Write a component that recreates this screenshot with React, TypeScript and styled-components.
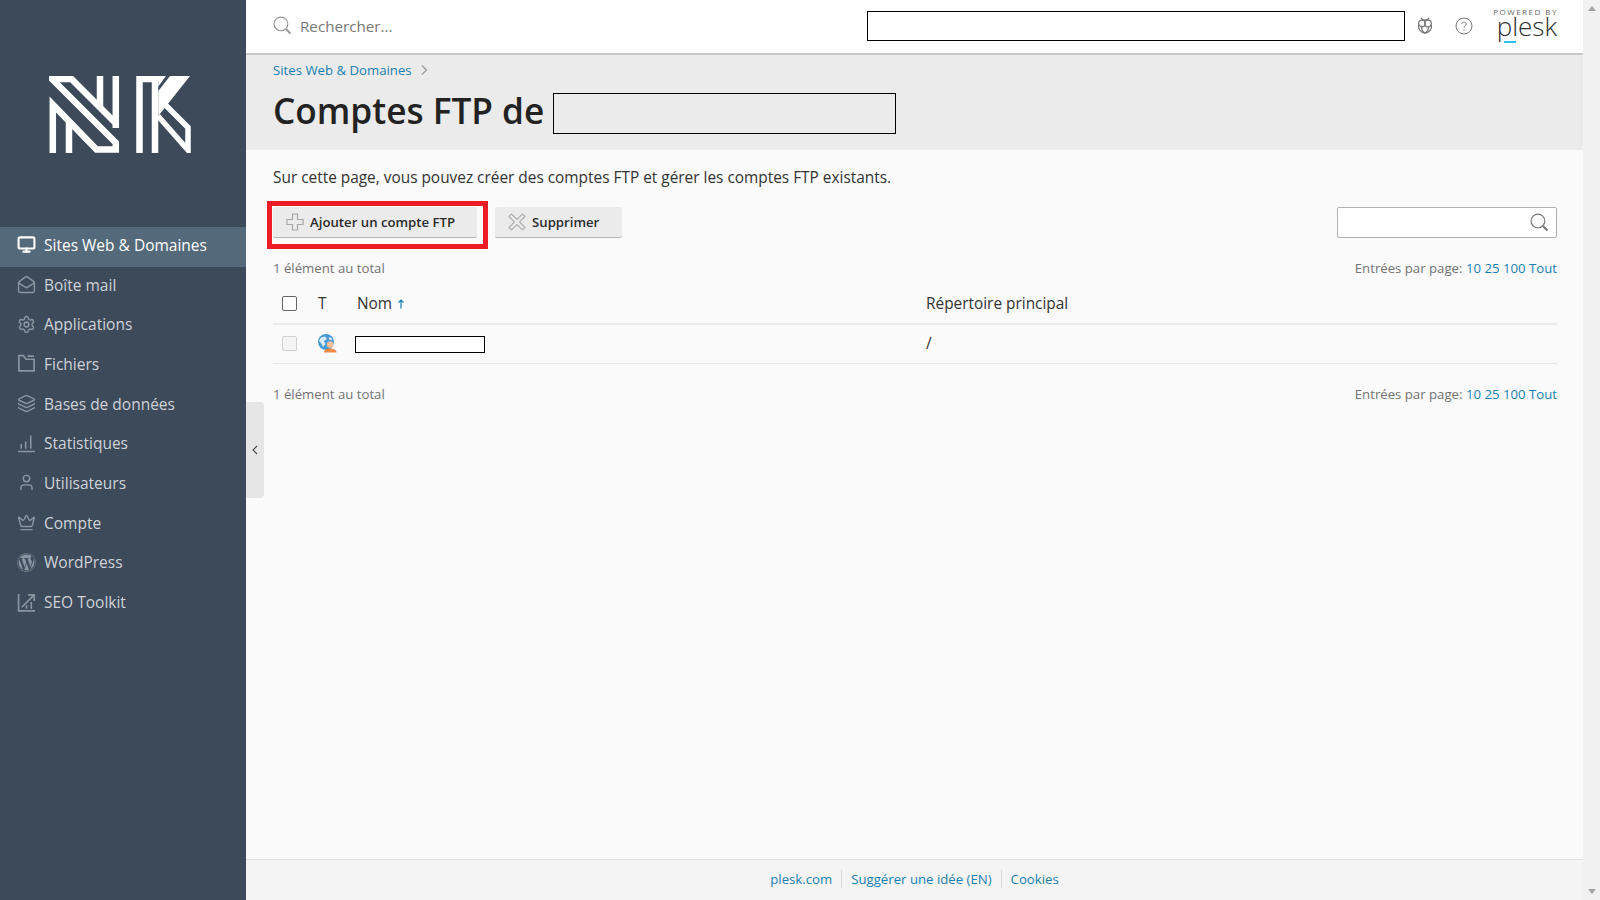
import { ReactNode } from 'react';
import styled, { createGlobalStyle } from 'styled-components';
import { Crown, Layers, MailOpen, Monitor, Settings, User } from 'lucide-react';
import { FaWordpress } from 'react-icons/fa';

const GlobalStyle = createGlobalStyle`
  html, body {
    margin: 0;
    padding: 0;
    height: 100%;
    overflow: hidden;
    font-family: "Open Sans", "Liberation Sans", sans-serif;
  }
  * { box-sizing: border-box; }
`;

const Page = styled.div`
  display: grid;
  grid-template-columns: 246px 1fr 17px;
  height: 900px;
`;

/* --- sidebar --- */
const Sidebar = styled.aside`
  background: #3c4a5a;
  display: flex;
  flex-direction: column;
`;

const LogoArea = styled.div`
  height: 227px;
  padding: 76px 0 0 49px;
`;

const Nav = styled.nav`
  display: flex;
  flex-direction: column;
`;

const NavItem = styled.a<{ $active?: boolean }>`
  display: flex;
  align-items: center;
  gap: 8.5px;
  height: 39.7px;
  padding: 0 0 4px 16.5px;
  font-size: 15.5px;
  color: ${({ $active }) => ($active ? '#ffffff' : '#cfd3d8')};
  background: ${({ $active }) => ($active ? '#546979' : 'transparent')};
  svg {
    flex: none;
    width: 19px;
    height: 19px;
    color: ${({ $active }) => ($active ? '#ffffff' : '#8b95a0')};
  }
`;

/* --- main column --- */
const Main = styled.main`
  position: relative;
  display: flex;
  flex-direction: column;
  min-width: 0;
  background: #fafafa;
`;

const TopBar = styled.header`
  display: flex;
  align-items: center;
  height: 55px;
  flex: none;
  padding: 0 26px 2px 27px;
  background: #ffffff;
  border-bottom: 2px solid #c9c9c9;
`;

const GlobalSearch = styled.div`
  display: flex;
  align-items: center;
  gap: 8px;
  flex: 1;
  font-size: 15.2px;
  color: #777777;
  svg { width: 19px; height: 19px; color: #999999; }
`;

const RedactedField = styled.div`
  width: 538px;
  height: 30px;
  background: #ffffff;
  border: 1px solid #000000;
`;

const TopIcon = styled.span<{ $left: number }>`
  display: flex;
  margin-left: ${({ $left }) => $left}px;
  color: #7a7a7a;
`;

const PleskLogo = styled.div`
  position: relative;
  display: flex;
  flex-direction: column;
  align-items: flex-end;
  align-self: flex-start;
  width: 66px;
  margin: 7px 0 0 18px;
  color: #2d2d2d;
`;

const PoweredBy = styled.span`
  font-size: 8px;
  line-height: 9px;
  letter-spacing: 1.5px;
  margin-right: -1px;
  color: #666666;
  white-space: nowrap;
`;

const PleskWord = styled.span`
  font-weight: 300;
  font-size: 26px;
  line-height: 21px;
`;

const PleskAccent = styled.span`
  position: absolute;
  left: 13px;
  top: 34px;
  width: 12px;
  height: 2px;
  background: #28c3ea;
`;

const PageHead = styled.section`
  flex: none;
  height: 95px;
  padding: 6px 27px 0;
  background: #ebebeb;
`;

const Breadcrumb = styled.div`
  display: flex;
  align-items: center;
  gap: 8px;
  height: 17px;
  font-size: 13.2px;
  color: #1a7fb0;
  svg { width: 8px; height: 10px; }
`;

const TitleRow = styled.div`
  display: flex;
  align-items: center;
  gap: 9px;
  margin-top: 9px;
`;

const Title = styled.h1`
  margin: 0 0 6px;
  font-size: 35.2px;
  line-height: 46px;
  font-weight: 600;
  color: #222222;
`;

const RedactedTitle = styled.div`
  width: 343px;
  height: 41px;
  border: 1px solid #000000;
`;

const Content = styled.section`
  flex: 1;
  padding: 18px 26px 0 27px;
`;

const Intro = styled.p`
  margin: 0;
  font-size: 15.4px;
  line-height: 20px;
  color: #333333;
`;

const Toolbar = styled.div`
  display: flex;
  align-items: center;
  gap: 18px;
  margin-top: 19px;
`;

const ButtonWrap = styled.div`
  position: relative;
  display: flex;
`;

const RedFrame = styled.span`
  position: absolute;
  inset: -6px -11px -11px -6px;
  border: 5px solid #ed1c24;
  pointer-events: none;
`;

const ToolButton = styled.button<{ $width: number }>`
  display: flex;
  align-items: center;
  gap: 6px;
  width: ${({ $width }) => $width}px;
  height: 31px;
  padding: 0 0 0 13px;
  border: none;
  border-bottom: 1px solid #b5b5b5;
  border-radius: 2px;
  background: #ebebeb;
  font-family: inherit;
  font-size: 13.2px;
  font-weight: 600;
  color: #2b2b2b;
  svg { width: 18px; height: 18px; flex: none; }
`;

const ListSearch = styled.div`
  display: flex;
  align-items: center;
  justify-content: flex-end;
  width: 220px;
  height: 31px;
  margin-left: auto;
  padding-right: 7px;
  background: #ffffff;
  border: 1px solid #b0b0b0;
  border-radius: 2px;
  color: #777777;
  svg { width: 19px; height: 19px; }
`;

const ListMeta = styled.div<{ $top: number }>`
  display: flex;
  justify-content: space-between;
  margin-top: ${({ $top }) => $top}px;
  font-size: 13.2px;
  line-height: 18px;
  color: #737373;
`;

const PageSizes = styled.span`
  a { color: #1a7fb0; }
`;

const Table = styled.div`
  margin-top: 11px;
`;

const Row = styled.div<{ $head?: boolean }>`
  display: grid;
  grid-template-columns: 36px 39px 569px 1fr;
  align-items: center;
  height: ${({ $head }) => ($head ? 37 : 39)}px;
  padding: 0 0 ${({ $head }) => ($head ? 4 : 2)}px 9px;
  font-size: 15.4px;
  color: #333333;
  border-bottom: ${({ $head }) => ($head ? '2px solid #ebebeb' : '1px solid #e6e6e6')};
`;

const CheckBox = styled.span<{ $disabled?: boolean }>`
  display: block;
  width: 15px;
  height: 15px;
  border-radius: 2px;
  background: ${({ $disabled }) => ($disabled ? '#f4f4f4' : '#ffffff')};
  border: 1px solid ${({ $disabled }) => ($disabled ? '#d0d0d0' : '#666666')};
`;

const SortArrow = styled.svg`
  width: 8px;
  height: 10px;
  margin-left: 5px;
  color: #1a7fb0;
`;

const RedactedName = styled.div`
  width: 130px;
  height: 17px;
  margin: 2px 0 0 -2px;
  background: #ffffff;
  border: 1px solid #000000;
`;

const CollapseHandle = styled.div`
  position: absolute;
  left: 0;
  top: 402px;
  display: flex;
  align-items: center;
  justify-content: center;
  width: 18px;
  height: 96px;
  background: #e6e6e6;
  border-radius: 0 4px 4px 0;
  color: #444444;
  svg { width: 6px; height: 10px; }
`;

const Footer = styled.footer`
  flex: none;
  display: flex;
  align-items: center;
  justify-content: center;
  height: 41px;
  padding-bottom: 2px;
  background: #f4f4f4;
  border-top: 1px solid #e0e0e0;
  font-size: 13.2px;
  color: #1a7fb0;
`;

const FooterLink = styled.a<{ $first?: boolean }>`
  padding: 0 9px;
  line-height: 18px;
  border-left: ${({ $first }) => ($first ? 'none' : '1px solid #dcdcdc')};
`;

const ScrollTrack = styled.div`
  display: flex;
  flex-direction: column;
  align-items: center;
  justify-content: space-between;
  padding: 6px 0;
  background: #f1f1f1;
`;

const ScrollArrow = styled.span<{ $down?: boolean }>`
  width: 0;
  height: 0;
  border-left: 4px solid transparent;
  border-right: 4px solid transparent;
  ${({ $down }) => ($down ? 'border-top: 5px solid #a3a3a3;' : 'border-bottom: 5px solid #a3a3a3;')}
`;

/* --- drawings --- */
const NkLogo = () => (
  <svg width="142" height="77" viewBox="49 76 142 77" fill="none" stroke="#ffffff" strokeWidth="6.5">
    <path d="M52.8 153V104.6L96.5 149.5H115.8V142.8L52 79H71.5L115.8 123.3" />
    <path d="M115.8 76V128" />
    <path d="M100 76V108" />
    <path d="M69 153V122" />
    <path d="M139.5 153V79H155V153" />
    <path stroke="none" fill="#ffffff" d="M158 76H166L158.3 86.5ZM170 76H190L158.3 116V91Z" />
    <path strokeWidth="5.5" d="M165 104.5L188 127.5V150L158 116" />
  </svg>
);

const FolderIcon = () => (
  <svg viewBox="0 0 18 18" fill="none" stroke="currentColor" strokeWidth="1.6">
    <path d="M1.8 1.5V16H16.2V5H8.5L6 1.5ZM10 2H16" />
  </svg>
);

const StatsIcon = () => (
  <svg viewBox="0 0 18 18" fill="none" stroke="currentColor" strokeWidth="1.5">
    <path d="M1 16.5H17M4 14V9.5M8.2 14V7M13 14V1.5" />
  </svg>
);

const SeoIcon = () => (
  <svg viewBox="0 0 18 18" fill="none" stroke="currentColor" strokeWidth="1.6">
    <path d="M1.5 1V17H17M4.5 13.5L16 2M10.5 1.8H16.3V7.5M9 15V11.5M13.5 15V8.5" />
  </svg>
);

const SearchIcon = () => (
  <svg viewBox="0 0 18 18" fill="none" stroke="currentColor">
    <circle cx="7.5" cy="7.5" r="6.5" strokeWidth="1.1" />
    <path d="M12.5 12.5L16.5 16.5" strokeWidth="2" />
  </svg>
);

const PlusOutline = () => (
  <svg viewBox="0 0 18 18" fill="none" stroke="#a8a8a8" strokeWidth="1.2">
    <path d="M6.5 1H11.5V6.5H17V11.5H11.5V17H6.5V11.5H1V6.5H6.5Z" />
  </svg>
);

const CrossOutline = () => (
  <svg viewBox="0 0 18 18" fill="none" stroke="#b0b0b0" strokeWidth="1.2">
    <path d="M3.5 1L9 6.5L14.5 1L17 3.5L11.5 9L17 14.5L14.5 17L9 11.5L3.5 17L1 14.5L6.5 9L1 3.5Z" />
  </svg>
);

const OwlIcon = () => (
  <svg width="16" height="17" viewBox="0 0 16 17" fill="none" stroke="currentColor" strokeWidth="1.3">
    <path d="M4 1L5.800 3H10.200L12 1" />
    <circle cx="5" cy="6.500" r="3.300" />
    <circle cx="11" cy="6.500" r="3.300" />
    <path d="M1.700 7.500C.5 12 4 16 8 16C12 16 15.500 12 14.300 7.500" />
    <path d="M4.500 10C4.500 13 6 15 8 16C10 15 11.500 13 11.500 10" />
  </svg>
);

const HelpIcon = () => (
  <svg width="18" height="18" viewBox="0 0 18 18" fill="none" stroke="currentColor" strokeWidth="1">
    <circle cx="9" cy="9" r="8" />
    <path d="M6.800 7C6.800 4.500 11.200 4.500 11.200 7C11.200 8.800 9 8.800 9 10.800" />
    <path d="M9 12.400V13.600" />
  </svg>
);

const GlobeUserIcon = () => (
  <svg width="19" height="19" viewBox="0 0 19 19">
    <circle cx="8" cy="8" r="8" fill="#4a9bd4" />
    <path d="M3 3.500L7 2.500L9 5L6 7L7.500 10L5 13L3 9L1 7Z" fill="#d9ecf8" />
    <path d="M11 3L14 4.500L13.500 6.500L11 5.500Z" fill="#d9ecf8" />
    <circle cx="12" cy="10.500" r="3.200" fill="#f6c09c" />
    <path d="M6 18.500C6 15.500 9 14.500 12 14.500C15 14.500 18.500 15.500 18.500 18.500Z" fill="#f58a48" />
  </svg>
);

const Chevron = () => (
  <svg viewBox="0 0 8 10" fill="none" stroke="#999999" strokeWidth="1.2">
    <path d="M2 .5L6.500 5L2 9.500" />
  </svg>
);

const ChevronLeft = () => (
  <svg viewBox="0 0 6 10" fill="none" stroke="currentColor" strokeWidth="1.1">
    <path d="M5 1L1 5L5 9" />
  </svg>
);

const navItems: { label: string; icon: ReactNode; active?: boolean }[] = [
  { label: 'Sites Web & Domaines', icon: <Monitor strokeWidth={2.6} />, active: true },
  { label: 'Boîte mail', icon: <MailOpen strokeWidth={1.8} /> },
  { label: 'Applications', icon: <Settings strokeWidth={1.9} /> },
  { label: 'Fichiers', icon: <FolderIcon /> },
  { label: 'Bases de données', icon: <Layers strokeWidth={1.8} /> },
  { label: 'Statistiques', icon: <StatsIcon /> },
  { label: 'Utilisateurs', icon: <User strokeWidth={1.8} /> },
  { label: 'Compte', icon: <Crown strokeWidth={1.8} /> },
  { label: 'WordPress', icon: <FaWordpress /> },
  { label: 'SEO Toolkit', icon: <SeoIcon /> },
];

const Meta = ({ top }: { top: number }) => (
  <ListMeta $top={top}>
    <span>1 élément au total</span>
    <span>
      Entrées par page:{' '}
      <PageSizes>
        <a>10</a> <a>25</a> <a>100</a> <a>Tout</a>
      </PageSizes>
    </span>
  </ListMeta>
);

export default function App() {
  return (
    <Page>
      <GlobalStyle />
      <Sidebar>
        <LogoArea>
          <NkLogo />
        </LogoArea>
        <Nav>
          {navItems.map((item) => (
            <NavItem key={item.label} $active={item.active}>
              {item.icon}
              {item.label}
            </NavItem>
          ))}
        </Nav>
      </Sidebar>

      <Main>
        <TopBar>
          <GlobalSearch>
            <SearchIcon />
            Rechercher...
          </GlobalSearch>
          <RedactedField />
          <TopIcon $left={12}>
            <OwlIcon />
          </TopIcon>
          <TopIcon $left={22}>
            <HelpIcon />
          </TopIcon>
          <PleskLogo>
            <PoweredBy>POWERED BY</PoweredBy>
            <PleskWord>plesk</PleskWord>
            <PleskAccent />
          </PleskLogo>
        </TopBar>

        <PageHead>
          <Breadcrumb>
            Sites Web &amp; Domaines
            <Chevron />
          </Breadcrumb>
          <TitleRow>
            <Title>Comptes FTP de</Title>
            <RedactedTitle />
          </TitleRow>
        </PageHead>

        <Content>
          <Intro>Sur cette page, vous pouvez créer des comptes FTP et gérer les comptes FTP existants.</Intro>
          <Toolbar>
            <ButtonWrap>
              <ToolButton $width={204}>
                <PlusOutline />
                Ajouter un compte FTP
              </ToolButton>
              <RedFrame />
            </ButtonWrap>
            <ToolButton $width={127}>
              <CrossOutline />
              Supprimer
            </ToolButton>
            <ListSearch>
              <SearchIcon />
            </ListSearch>
          </Toolbar>
          <Meta top={21} />
          <Table>
            <Row $head>
              <CheckBox />
              <span>T</span>
              <span>
                Nom
                <SortArrow viewBox="0 0 8 10" fill="none" stroke="currentColor" strokeWidth="1.2">
                  <path d="M4 9.500V1M1.500 3.500L4 1L6.500 3.500" />
                </SortArrow>
              </span>
              <span>Répertoire principal</span>
            </Row>
            <Row>
              <CheckBox $disabled />
              <GlobeUserIcon />
              <RedactedName />
              <span>/</span>
            </Row>
          </Table>
          <Meta top={21} />
        </Content>

        <Footer>
          <FooterLink $first>plesk.com</FooterLink>
          <FooterLink>Suggérer une idée (EN)</FooterLink>
          <FooterLink>Cookies</FooterLink>
        </Footer>

        <CollapseHandle>
          <ChevronLeft />
        </CollapseHandle>
      </Main>

      <ScrollTrack>
        <ScrollArrow />
        <ScrollArrow $down />
      </ScrollTrack>
    </Page>
  );
}
